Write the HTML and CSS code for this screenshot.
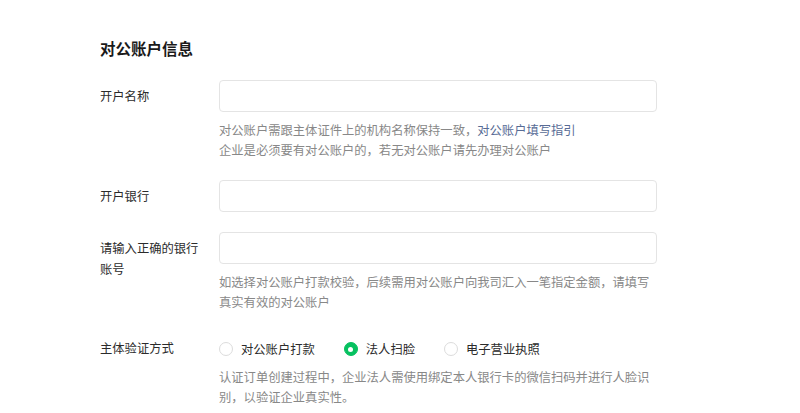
FILE: index.html
```html
<!DOCTYPE html>
<html lang="zh-CN">
<head>
<meta charset="utf-8">
<title>对公账户信息</title>
<link rel="stylesheet" href="styles.css">
</head>
<body>
<section class="account-form">
  <h2 class="section-title">对公账户信息</h2>

  <div class="form-item">
    <label class="form-label">开户名称</label>
    <div class="form-control">
      <input class="text-input" type="text">
      <p class="hint">对公账户需跟主体证件上的机构名称保持一致，<a class="link" href="#">对公账户填写指引</a><br>企业是必须要有对公账户的，若无对公账户请先办理对公账户</p>
    </div>
  </div>

  <div class="form-item">
    <label class="form-label">开户银行</label>
    <div class="form-control">
      <input class="text-input" type="text">
    </div>
  </div>

  <div class="form-item">
    <label class="form-label">请输入正确的银行账号</label>
    <div class="form-control">
      <input class="text-input" type="text">
      <p class="hint hint-narrow">如选择对公账户打款校验，后续需用对公账户向我司汇入一笔指定金额，请填写真实有效的对公账户</p>
    </div>
  </div>

  <div class="form-item">
    <label class="form-label">主体验证方式</label>
    <div class="form-control">
      <div class="radio-group">
        <span class="radio"><i class="radio-dot"></i>对公账户打款</span>
        <span class="radio is-checked"><i class="radio-dot"></i>法人扫脸</span>
        <span class="radio"><i class="radio-dot"></i>电子营业执照</span>
      </div>
      <p class="hint hint-tight">认证订单创建过程中，企业法人需使用绑定本人银行卡的微信扫码并进行人脸识别，以验证企业真实性。</p>
    </div>
  </div>
</section>
</body>
</html>
```

FILE: styles.css
```css
* {
  box-sizing: border-box;
}

html, body {
  margin: 0;
  padding: 0;
  background: #ffffff;
}

body {
  font-family: "Noto Sans CJK SC", "Noto Sans", sans-serif;
  color: #333333;
  font-size: 12.3px;
}

.account-form {
  padding: 36px 0 0 100px;
}

.section-title {
  margin: 0 0 20px;
  font-size: 15.5px;
  line-height: 24px;
  font-weight: 700;
  color: #1a1a1a;
}

.form-item {
  display: flex;
  align-items: flex-start;
  margin-bottom: 20px;
}

.form-label {
  width: 104px;
  margin-right: 15px;
  padding-top: 6px;
  line-height: 21px;
  font-size: 12.3px;
  color: #2b2b2b;
  flex-shrink: 0;
}

.form-control {
  display: flex;
  flex-direction: column;
  width: 460px;
}

.text-input {
  display: block;
  width: 438px;
  height: 32px;
  margin: 0;
  padding: 0 10px;
  border: 1px solid #e4e4e4;
  border-radius: 4px;
  background: #ffffff;
  font: inherit;
  outline: none;
}

.hint {
  margin: 8px 0 0;
  width: 438px;
  font-size: 12.3px;
  line-height: 20px;
  color: #888888;
}

.hint-narrow {
  width: 433px;
}

.hint-tight {
  margin-top: 1px;
}

.link {
  color: #576b95;
  text-decoration: none;
}

.radio-group {
  display: flex;
  align-items: center;
  height: 34px;
  gap: 29px;
}

.radio {
  display: inline-flex;
  align-items: center;
  font-size: 12.3px;
  color: #2b2b2b;
}

.radio-dot {
  width: 14px;
  height: 14px;
  margin-right: 8px;
  border: 1px solid #dcdcdc;
  border-radius: 50%;
  background: #ffffff;
  position: relative;
}

.radio.is-checked .radio-dot {
  border-color: #07c160;
  background: #07c160;
}

.radio.is-checked .radio-dot::after {
  content: "";
  position: absolute;
  left: 50%;
  top: 50%;
  width: 5px;
  height: 5px;
  margin: -2.5px 0 0 -2.5px;
  border-radius: 50%;
  background: #ffffff;
}
```
